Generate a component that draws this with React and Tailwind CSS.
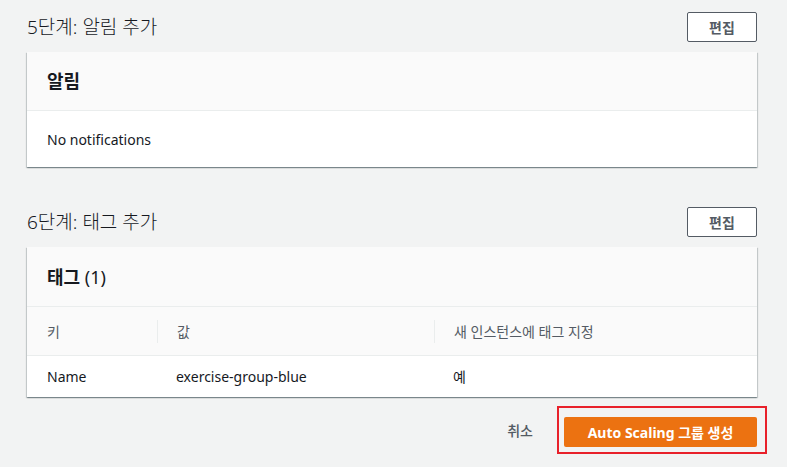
export default function App() {
  const font = { fontFamily: '"Noto Sans", "Noto Sans CJK KR", sans-serif' };
  const cardShadow =
    "shadow-[0_1px_1px_0_rgba(0,28,36,0.3),1px_1px_1px_0_rgba(0,28,36,0.15),-1px_1px_1px_0_rgba(0,28,36,0.15)]";

  return (
    <div
      className="min-h-[467px] w-[787px] bg-[#f2f3f3] pt-[12px] pl-[27px] text-[#16191f]"
      style={font}
    >
      <div className="w-[730px]">
        {/* 5단계 */}
        <div className="flex items-center justify-between h-[30px] mb-[10px]">
          <h2 className="text-[19px] font-light text-[#16191f] leading-none">5단계: 알림 추가</h2>
          <button className="w-[70px] h-[30px] border border-[#545b64] rounded-[2px] bg-white text-[14px] font-bold text-[#545b64]">
            편집
          </button>
        </div>
        <div className={`bg-white ${cardShadow}`}>
          <div className="h-[59px] bg-[#fafafa] border-b border-[#eaeded] flex items-center px-[20px]">
            <h3 className="text-[18px] font-bold leading-none">알림</h3>
          </div>
          <div className="h-[56px] flex items-center px-[20px] text-[14px]">No notifications</div>
        </div>

        {/* 6단계 */}
        <div className="flex items-center justify-between h-[30px] mt-[40px] mb-[10px]">
          <h2 className="text-[19px] font-light text-[#16191f] leading-none">6단계: 태그 추가</h2>
          <button className="w-[70px] h-[30px] border border-[#545b64] rounded-[2px] bg-white text-[14px] font-bold text-[#545b64]">
            편집
          </button>
        </div>
        <div className={`bg-white ${cardShadow}`}>
          <div className="h-[60px] bg-[#fafafa] border-b border-[#eaeded] flex items-center px-[20px]">
            <h3 className="text-[18px] leading-none">
              <span className="font-bold">태그</span>{" "}
              <span className="font-normal">(1)</span>
            </h3>
          </div>
          <div className="grid grid-cols-[130px_277px_1fr] h-[49px] bg-[#fafafa] border-b border-[#eaeded] items-center text-[14px] text-[#545b64]">
            <div className="pl-[20px]">키</div>
            <div className="border-l border-[#eaeded] pl-[19px] h-[23px] flex items-center">값</div>
            <div className="border-l border-[#eaeded] pl-[19px] h-[23px] flex items-center">새 인스턴스에 태그 지정</div>
          </div>
          <div className="grid grid-cols-[130px_277px_1fr] h-[41px] items-center text-[14px]">
            <div className="pl-[20px]">Name</div>
            <div className="pl-[19px]">exercise-group-blue</div>
            <div className="pl-[19px]">예</div>
          </div>
        </div>

        {/* 하단 버튼 */}
        <div className="flex items-center justify-end mt-[9px]">
          <button className="text-[14px] font-medium text-[#545b64] mr-[24px]">취소</button>
          <div className="border-2 border-[#e8202a] pl-[5px] pr-[8px] pt-[9px] pb-[5px] mr-[-10px]">
            <button className="w-[193px] h-[30px] bg-[#ec7211] rounded-[2px] text-white text-[14px] font-bold">
              Auto Scaling 그룹 생성
            </button>
          </div>
        </div>
      </div>
    </div>
  );
}
